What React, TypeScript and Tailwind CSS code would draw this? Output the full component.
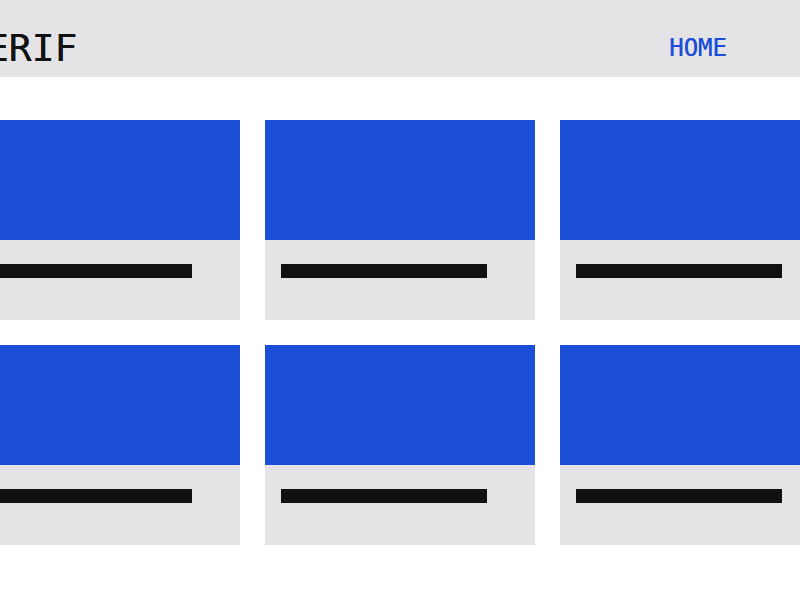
export default function App() {
  const cards = [0, 1, 2, 3, 4, 5];
  return (
    <div className="w-[800px] h-[600px] overflow-hidden bg-white" style={{ fontFamily: '"DejaVu Sans Mono", monospace' }}>
      <header className="h-[77px] bg-[#e4e4e7] flex justify-center pt-[19px]">
        <div className="w-[860px] shrink-0 flex items-center justify-between">
          <span className="text-[38px] leading-none text-[#111111] ml-[-7px] [text-shadow:0_0_0.6px_#111111]">SERIF</span>
          <a className="text-[24px] leading-none text-[#1d4ed8] mr-[103px] [text-shadow:0_0_0.5px_#1d4ed8]">HOME</a>
        </div>
      </header>
      <main className="flex justify-center pt-[43px]">
        <div className="w-[860px] shrink-0 grid grid-cols-3 gap-[25px]">
          {cards.map((c) => (
            <div key={c} className="flex flex-col">
              <div className="h-[120px] bg-[#1d4ed8]" />
              <div className="h-[80px] bg-[#e4e4e7] pt-[24px] pl-[16px]">
                <div className="h-[14px] w-[206px] bg-[#111111]" />
              </div>
            </div>
          ))}
        </div>
      </main>
    </div>
  );
}
